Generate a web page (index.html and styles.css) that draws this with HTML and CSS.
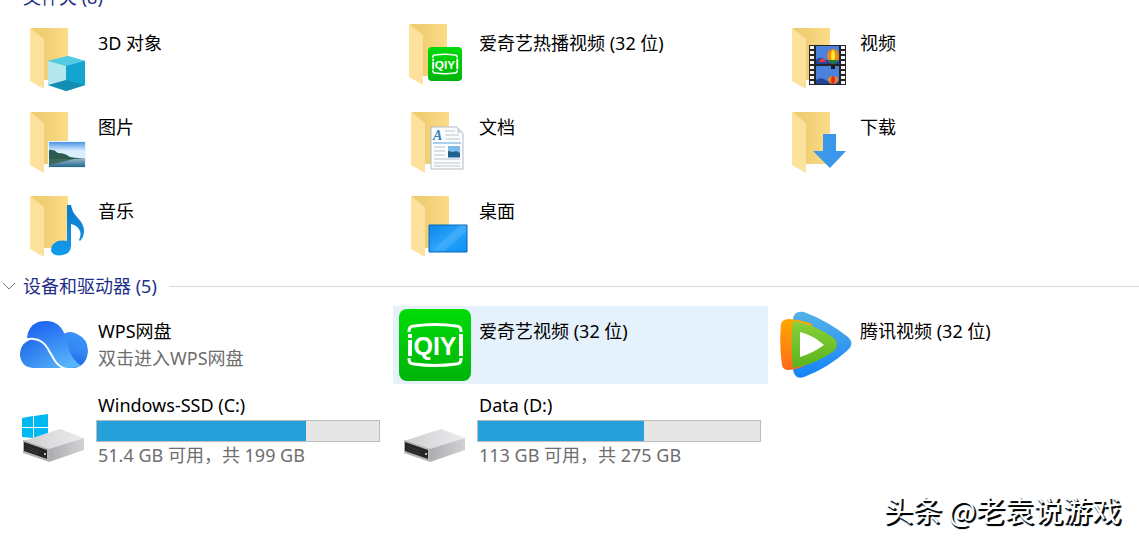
FILE: index.html
```html
<!DOCTYPE html>
<html lang="zh-CN">
<head>
  <meta charset="UTF-8">
  <title>此电脑</title>
  <link rel="stylesheet" href="styles.css">
</head>
<body>
  <svg class="defs" aria-hidden="true">
    <defs>
      <linearGradient id="back" x1="0" x2="1"><stop offset="0.3" stop-color="#efcd72"/><stop offset="1" stop-color="#fbdc88"/></linearGradient>
      <linearGradient id="flap" x1="0" x2="1"><stop offset="0" stop-color="#ffe298"/><stop offset="1" stop-color="#fbe0a0"/></linearGradient>
      <linearGradient id="sky" x2="0" y2="1"><stop offset="0" stop-color="#4c94e4"/><stop offset="0.5" stop-color="#dcefff"/></linearGradient>
      <linearGradient id="sea" x2="0" y2="1"><stop offset="0" stop-color="#9fc0d0"/><stop offset="1" stop-color="#27668d"/></linearGradient>
      <linearGradient id="screen" x2="1" y2="1"><stop offset="0" stop-color="#0a86e8"/><stop offset="0.5" stop-color="#2aa3fb"/><stop offset="1" stop-color="#0a92f4"/></linearGradient>
      <linearGradient id="note" x2="0" y2="1"><stop offset="0" stop-color="#0d78c8"/><stop offset="1" stop-color="#139bee"/></linearGradient>
      <linearGradient id="qiyi" x2="0" y2="1"><stop offset="0" stop-color="#00dc08"/><stop offset="1" stop-color="#00b40a"/></linearGradient>
      <linearGradient id="cloud" x1="0.2" x2="0.6" y2="1"><stop offset="0" stop-color="#1b62f2"/><stop offset="1" stop-color="#58b4fb"/></linearGradient>
      <linearGradient id="cloudRight" x1="0.8" x2="0.5" y2="1"><stop offset="0" stop-color="#3b94f8"/><stop offset="0.5" stop-color="#3488f4"/><stop offset="1" stop-color="#1a5fe4"/></linearGradient>
      <linearGradient id="cloudLeft" x2="1" y2="1"><stop offset="0" stop-color="#1f66e8"/><stop offset="1" stop-color="#52b0fa"/></linearGradient>
      <linearGradient id="playBlue" x2="0" y2="1"><stop offset="0" stop-color="#54b2e6"/><stop offset="1" stop-color="#1583fa"/></linearGradient>
      <linearGradient id="playOrange" x2="0" y2="1"><stop offset="0" stop-color="#ffa800"/><stop offset="1" stop-color="#ff6a1c"/></linearGradient>
      <linearGradient id="playGreen" x2="0" y2="1"><stop offset="0" stop-color="#8ad03a"/><stop offset="1" stop-color="#58b41c"/></linearGradient>
      <linearGradient id="lid" x1="0" x2="1"><stop offset="0" stop-color="#cfcfd1"/><stop offset="1" stop-color="#ececee"/></linearGradient>
      <linearGradient id="side" x1="0" x2="1"><stop offset="0" stop-color="#adadb0"/><stop offset="1" stop-color="#d2d2d4"/></linearGradient>
    </defs>
    <symbol id="folder" viewBox="0 0 72 72">
      <path d="M13 7h37v52H24z" fill="url(#back)"/>
      <path d="M12 7l14 11v50L12 60z" fill="url(#flap)"/>
    </symbol>
    <symbol id="drive" viewBox="0 0 72 72">
      <path d="M5 48l37-12 24 9-35 12z" fill="url(#lid)"/>
      <path d="M31 56l35-11v12L31 69z" fill="url(#side)"/>
      <path d="M5 47l26 9v13L5 60z" fill="#b4b4b6"/>
      <path d="M6 49l23 8v9L6 58z" fill="#262626"/>
      <path d="M8 53l13 5M8 56l13 5" stroke="#3a3a3a"/>
      <circle cx="27" cy="61" r="1" fill="#e8f4e8"/>
    </symbol>
    <symbol id="qiyi-logo" viewBox="0 0 72 72">
      <rect width="72" height="72" rx="8" fill="url(#qiyi)"/>
      <path d="M10 23v-1q0-5 5-5 21-3 42 0 5 0 5 5v1M10 49v1q0 5 5 5 21 3 42 0 5 0 5-5v-1" fill="none" stroke="#fff" stroke-width="3"/>
      <path d="M9 25h4v4H9zM9 31h4v16H9zM60 25h4v22h-4z" fill="#fff"/>
      <text class="qiyi-text" x="36" y="46" text-anchor="middle">QIY</text>
    </symbol>
  </svg>

  <main class="explorer">
    <section class="group">
      <h2 class="group-title">
        <button class="group-toggle">
          <svg class="chevron" viewBox="0 0 14 8"><path d="M1 1l6 6 6-6"/></svg>
          文件夹 (8)
        </button>
      </h2>
      <div class="tiles">
        <a class="tile" href="#">
          <svg class="icon" viewBox="0 0 72 72">
            <use href="#folder"/>
            <path d="M30 40l20-5 17 5v24l-19 6-18-6z" fill="#4cc4dc"/>
            <path d="M30 40l20-5 17 5-19 5z" fill="#52cbe2"/>
            <path d="M30 40l18 5v25l-18-6z" fill="#b4e8ee"/>
            <path d="M48 45l19-5v24l-19 6z" fill="#12a5d2"/>
            <path d="M30 64l18-5v11zM48 59l19 5-19 6z" fill="#148eb0"/>
          </svg>
          <span class="info"><span class="name">3D 对象</span></span>
        </a>
        <a class="tile" href="#">
          <svg class="icon" viewBox="0 0 72 72">
            <use href="#folder" x="-2" y="-4"/>
            <use href="#qiyi-logo" x="29" y="26" width="34" height="34"/>
          </svg>
          <span class="info"><span class="name">爱奇艺热播视频 (32 位)</span></span>
        </a>
        <a class="tile" href="#">
          <svg class="icon" viewBox="0 0 72 72">
            <use href="#folder"/>
            <path d="M29 24h37v40H29z" fill="#252525"/>
            <path d="M36 25h23v18H36zM36 45h23v18H36z" fill="#4b83dc"/>
            <path d="M36 39q5-5 9 0l5-1 9 2v3H36zM36 59q6-4 11 1h12v3H36z" fill="#24449a"/>
            <path d="M38 41l4-4 5 4z" fill="#e23a40"/>
            <ellipse cx="53" cy="35" rx="6" ry="7" fill="#f08a10"/>
            <ellipse cx="53" cy="35" rx="2" ry="6" fill="#ffe93a"/>
            <path d="M48 39h10l-4 4h-2z" fill="#1f7a3c"/>
            <path d="M51 45h4v3h-4z" fill="#191919"/>
            <ellipse cx="53" cy="59" rx="5" ry="4" fill="#f08a10"/>
            <ellipse cx="53" cy="59" rx="2" ry="4" fill="#d73032"/>
            <path d="M32 25v38M63 25v38" stroke="#f4f4f4" stroke-width="4" stroke-dasharray="3 2"/>
          </svg>
          <span class="info"><span class="name">视频</span></span>
        </a>
        <a class="tile" href="#">
          <svg class="icon" viewBox="0 0 72 72">
            <use href="#folder"/>
            <path d="M30 36h38v27H30z" fill="#e9f5fc"/>
            <path d="M31 37h36v18H31z" fill="url(#sky)"/>
            <path d="M31 53h36v9H31z" fill="url(#sea)"/>
            <path d="M31 45q5-1 9 3 7 0 12 4l13 2H31z" fill="#2c5c50"/>
            <path d="M31 54h25l-25 6z" fill="#3e6b5c"/>
          </svg>
          <span class="info"><span class="name">图片</span></span>
        </a>
        <a class="tile" href="#">
          <svg class="icon" viewBox="0 0 72 72">
            <use href="#folder"/>
            <path d="M32 22h26l6 6v36H32z" fill="#fafcfe" stroke="#b4bcc4"/>
            <path d="M58 22v6h6z" fill="#d4dce2"/>
            <path d="M46 26h10M46 30h14M46 34h15M35 42h11M35 46h11M35 50h11M35 54h26M35 58h26M35 61h26" stroke="#bfc5cb"/>
            <path d="M34 38h28" stroke="#5aa4dc"/>
            <path d="M49 41h12v12H49z" fill="#7fb9e8"/>
            <path d="M49 46l5 1 3-1 4 2v4H49z" fill="#245f8c"/>
            <text class="doc-letter" x="34" y="35">A</text>
          </svg>
          <span class="info"><span class="name">文档</span></span>
        </a>
        <a class="tile" href="#">
          <svg class="icon" viewBox="0 0 72 72">
            <use href="#folder"/>
            <path d="M43 29h13v17h10L50 63 33 46h10z" fill="#3b97ea"/>
          </svg>
          <span class="info"><span class="name">下载</span></span>
        </a>
        <a class="tile" href="#">
          <svg class="icon" viewBox="0 0 72 72">
            <use href="#folder"/>
            <path d="M49 16h4q1 7 6 12 7 7 7 14 0 6-4 10l-1-1q3-6 0-11-3-4-8-5v22q0 7-8 9-11 2-12-5 0-6 7-9 5-1 9 0z" fill="url(#note)"/>
          </svg>
          <span class="info"><span class="name">音乐</span></span>
        </a>
        <a class="tile" href="#">
          <svg class="icon" viewBox="0 0 72 72">
            <use href="#folder"/>
            <path d="M30 36h38v27H30z" fill="url(#screen)" stroke="#0868b8"/>
            <path d="M34 62l27-26h6v7L45 62z" fill="#fff" opacity="0.1"/>
          </svg>
          <span class="info"><span class="name">桌面</span></span>
        </a>
      </div>
    </section>

    <section class="group">
      <h2 class="group-title">
        <button class="group-toggle">
          <svg class="chevron" viewBox="0 0 14 8"><path d="M1 1l6 6 6-6"/></svg>
          设备和驱动器 (5)
        </button>
      </h2>
      <div class="tiles">
        <a class="tile" href="#">
          <svg class="icon" viewBox="0 0 72 72">
            <path d="M42 28q8-8 17-3 11 5 11 17-1 14-13 17H40z" fill="url(#cloudRight)"/>
            <path d="M9 29Q10 17 20 13q12-3 19 2 7 5 9 15 5 22 15 26-3 3-10 3H38Z" fill="url(#cloud)"/>
            <path d="M2 46q0-13 13-16 10 0 15 10l7 12q3 5 7 7H15Q3 58 2 46z" fill="url(#cloudLeft)"/>
            <path d="M3 34q6-5 13-4 9 1 14 10l7 12q5 7 12 8" fill="none" stroke="#fff" stroke-width="2"/>
          </svg>
          <span class="info">
            <span class="name">WPS网盘</span>
            <span class="detail">双击进入WPS网盘</span>
          </span>
        </a>
        <a class="tile selected" href="#">
          <svg class="icon" viewBox="0 0 72 72"><use href="#qiyi-logo"/></svg>
          <span class="info"><span class="name">爱奇艺视频 (32 位)</span></span>
        </a>
        <a class="tile" href="#">
          <svg class="icon" viewBox="0 0 72 72">
            <path d="M13 10q1-9 11-7 24 9 44 25 7 6 0 13Q48 59 24 68q-9 3-11-7-3-25 0-51z" fill="url(#playBlue)"/>
            <path d="M1 15q1-5 9-5 12 1 22 5L30 54q-12 7-22 7-5 0-6-5-3-21-1-41z" fill="url(#playOrange)"/>
            <path d="M13 12q21 3 41 17 6 6 0 13-20 14-41 17-3-24 0-47z" fill="url(#playGreen)"/>
            <path d="M20 23q13 3 24 13-11 8-24 12z" fill="#fff"/>
          </svg>
          <span class="info"><span class="name">腾讯视频 (32 位)</span></span>
        </a>
        <a class="tile drive" href="#">
          <svg class="icon" viewBox="0 0 72 72">
            <path d="M4 25l11-2v11H4zM16 23l14-2v13H16zM4 35h11v10L4 44zM16 35h14v12l-14-2z" fill="#00b9f2"/>
            <use href="#drive"/>
          </svg>
          <span class="info">
            <span class="name">Windows-SSD (C:)</span>
            <progress class="usage" value="74" max="100" aria-label="C: 已用空间"></progress>
            <span class="detail">51.4 GB 可用，共 199 GB</span>
          </span>
        </a>
        <a class="tile drive" href="#">
          <svg class="icon" viewBox="0 0 72 72"><use href="#drive"/></svg>
          <span class="info">
            <span class="name">Data (D:)</span>
            <progress class="usage" value="59" max="100" aria-label="D: 已用空间"></progress>
            <span class="detail">113 GB 可用，共 275 GB</span>
          </span>
        </a>
      </div>
    </section>
  </main>

  <div class="watermark">头条 @老袁说游戏</div>
</body>
</html>
```
FILE: styles.css
```css
body {
  margin: 0;
  min-height: 100vh;
  overflow: hidden;
  background: #fff;
  color: #000;
  font-family: "Noto Sans", "Noto Sans CJK SC", sans-serif;
  font-size: 18px;
}
.defs {
  position: absolute;
  width: 0;
  height: 0;
}
/* list is scrolled a little, the first heading is cut off */
.explorer {
  margin-top: -15px;
}
.group-title {
  display: flex;
  align-items: center;
  gap: 12px;
  height: 24px;
  margin: 0;
  font-size: 18px;
  font-weight: normal;
}
.group-title::after {
  content: "";
  flex: 1;
  height: 1px;
  background: #d9d9d9;
}
.group-toggle {
  display: flex;
  align-items: center;
  gap: 7px;
  padding: 0 0 0 2px;
  border: none;
  background: none;
  color: #1e2f87;
  font: inherit;
  line-height: 24px;
  cursor: pointer;
}
.chevron {
  width: 14px;
  height: 8px;
  fill: none;
  stroke: #777;
}
.tiles {
  display: grid;
  grid-template-columns: 375fr 375fr 365fr;
  gap: 6px;
  padding: 9px 0 10px 12px;
}
.group + .group .tiles {
  padding-top: 8px;
}
.tile {
  display: flex;
  gap: 6px;
  height: 72px;
  padding: 3px 7px 3px 6px;
  color: inherit;
  text-decoration: none;
}
.tile:hover,
.tile.selected {
  background: #e5f1fb;
}
.icon {
  flex: none;
  width: 72px;
  height: 72px;
}
.info {
  display: flex;
  flex: 1;
  flex-direction: column;
  min-width: 0;
  padding-top: 9px;
  white-space: nowrap;
}
.name,
.detail {
  padding-left: 2px;
  line-height: 27px;
}
.detail {
  color: #6d6d6d;
}
.drive .info {
  padding-top: 0;
}
.drive .name {
  line-height: 24px;
}
.usage {
  box-sizing: border-box;
  flex: none;
  width: 100%;
  height: 22px;
  margin-top: 3px;
  border: 1px solid #bcbcbc;
  background: #e6e6e6;
  appearance: none;
}
.usage::-webkit-progress-bar {
  background: #e6e6e6;
}
.usage::-webkit-progress-value {
  background: #26a0da;
}
.qiyi-text {
  fill: #fff;
  font-family: "Liberation Sans", sans-serif;
  font-size: 25px;
  font-weight: bold;
}
.doc-letter {
  fill: #3a7fc0;
  font-family: "Liberation Serif", serif;
  font-size: 14px;
  font-style: italic;
  font-weight: bold;
}
.watermark {
  position: absolute;
  right: 18px;
  bottom: 10px;
  color: #fff;
  font-family: "Noto Sans CJK SC", sans-serif;
  font-size: 29px;
  line-height: 40px;
  text-shadow: 1px 2px 1px #000, 2px 2px 0 #222;
}
```
